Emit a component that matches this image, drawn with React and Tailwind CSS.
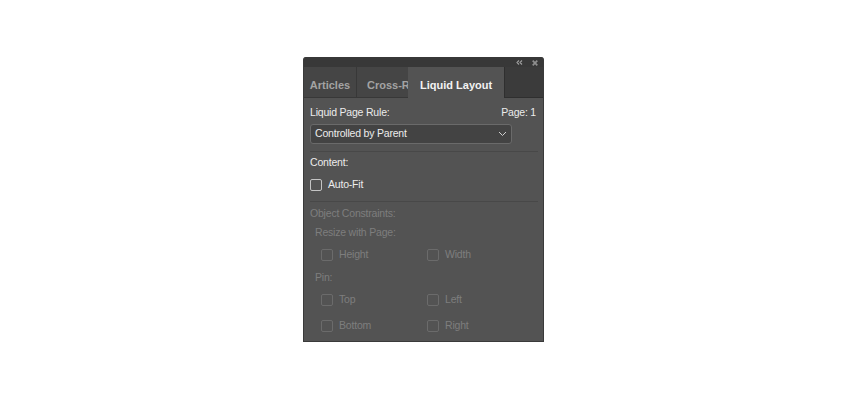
import React from "react";

// Checkbox square, dim when disabled
function Box({ dim }) {
  return (
    <span
      className={`block w-[12px] h-[12px] rounded-[2px] border ${
        dim ? "border-[#6b6b6b]" : "border-[#c4c4c4]"
      }`}
    />
  );
}

function Check({ label, dim, className = "" }) {
  return (
    <div className={`flex items-center h-[16px] ${className}`}>
      <Box dim={dim} />
      <span className={`ml-[6px] ${dim ? "text-[#7e7e7e]" : "text-[#ececec]"}`}>{label}</span>
    </div>
  );
}

export default function App() {
  return (
    <div
      className="w-[850px] h-[400px] bg-white flex justify-center pt-[57px]"
      style={{ fontFamily: "'Liberation Sans', Arial, sans-serif" }}
    >
      <div className="w-[241px] h-[285px] ml-[-3px] bg-[#535353] flex flex-col border border-t-0 border-[#3a3a3a] rounded-t-[3px] overflow-hidden text-[10.5px] tracking-[-0.2px]">
        {/* title bar */}
        <div className="h-[10px] bg-[#383838] flex items-center justify-end pr-[5px] gap-[9px]">
          <svg width="7" height="5" viewBox="0 0 7 5" className="mt-[1px]">
            <path d="M3 0.5L1 2.5L3 4.5M6 0.5L4 2.5L6 4.5" stroke="#a0a0a0" strokeWidth="1.1" fill="none" />
          </svg>
          <svg width="6" height="6" viewBox="0 0 6 6" className="mt-[1px]">
            <path d="M0.7 0.7L5.3 5.3M5.3 0.7L0.7 5.3" stroke="#8e8e8e" strokeWidth="1.7" />
          </svg>
        </div>

        {/* tabs */}
        <div className="h-[31px] flex bg-[#3b3b3b] text-[11px] font-bold tracking-normal">
          <div className="w-[53px] bg-[#454545] border-b border-r border-[#383838] flex items-center justify-center pt-[6px] text-[#a3a3a3]">
            Articles
          </div>
          <div className="w-[51px] bg-[#454545] border-b border-[#383838] flex items-center pl-[10px] pt-[6px] text-[#a3a3a3] overflow-hidden whitespace-nowrap">
            Cross-R
          </div>
          <div className="w-[96px] bg-[#535353] flex items-center pl-[12px] pt-[6px] text-[#f2f2f2]">
            Liquid Layout
          </div>
          <div className="flex-1 border-b border-l border-[#2f2f2f]" />
        </div>

        {/* body */}
        <div className="flex flex-col px-[6px] text-[#ececec]">
          <div className="flex items-center justify-between h-[16px] mt-[7px] pr-[1px]">
            <span>Liquid Page Rule:</span>
            <span>Page: 1</span>
          </div>

          <div className="mt-[3px] w-[202px] h-[20px] rounded-[3px] border border-[#6a6a6a] bg-[#434343] flex items-center justify-between pl-[4px] pr-[4px]">
            <span>Controlled by Parent</span>
            <svg width="9" height="6" viewBox="0 0 9 6">
              <path d="M1 1L4.5 4.5L8 1" stroke="#cfcfcf" strokeWidth="1" fill="none" />
            </svg>
          </div>

          <div className="mt-[7px] h-px bg-[#484848] mr-[-1px]" />

          <div className="flex items-center h-[16px] mt-[3px]">Content:</div>
          <Check label="Auto-Fit" className="mt-[6px]" />

          <div className="mt-[8px] h-px bg-[#484848] mr-[-1px]" />

          <div className="text-[#7e7e7e] flex flex-col">
            <div className="flex items-center h-[16px] mt-[4px]">Object Constraints:</div>
            <div className="flex items-center h-[16px] mt-[3px] pl-[5px]">Resize with Page:</div>
            <div className="grid grid-cols-[106px_1fr] pl-[11px] mt-[6px]">
              <Check label="Height" dim />
              <Check label="Width" dim />
            </div>
            <div className="flex items-center h-[16px] mt-[7px] pl-[5px]">Pin:</div>
            <div className="grid grid-cols-[106px_1fr] pl-[11px] mt-[6px]">
              <Check label="Top" dim />
              <Check label="Left" dim />
            </div>
            <div className="grid grid-cols-[106px_1fr] pl-[11px] mt-[10px]">
              <Check label="Bottom" dim />
              <Check label="Right" dim />
            </div>
          </div>
        </div>
      </div>
    </div>
  );
}
